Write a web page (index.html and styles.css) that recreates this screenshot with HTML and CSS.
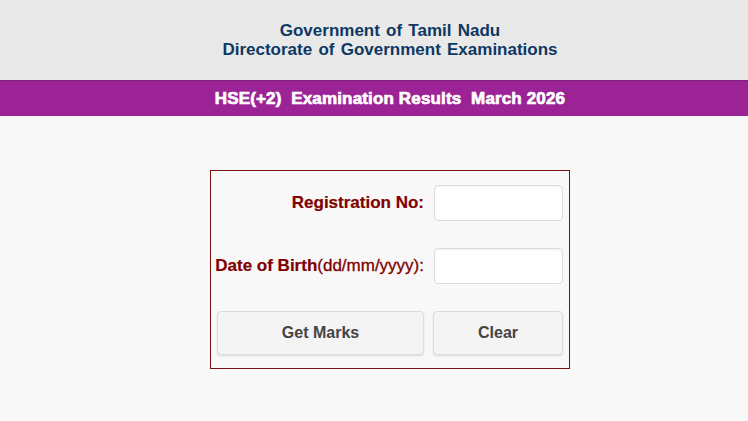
FILE: index.html
```html
<!DOCTYPE html>
<html>
<head>
<meta charset="utf-8">
<link rel="stylesheet" href="styles.css">
</head>
<body>
<header class="top">
  <div class="org">Government of Tamil Nadu</div>
  <div class="org">Directorate of Government Examinations</div>
</header>
<div class="band">HSE(+2)&nbsp; Examination Results&nbsp; March 2026</div>
<main class="main">
  <form class="box">
    <div class="row">
      <label class="lbl">Registration No:</label>
      <input class="inp" type="text">
    </div>
    <div class="row">
      <label class="lbl">Date of Birth<span class="fmt">(dd/mm/yyyy):</span></label>
      <input class="inp" type="text">
    </div>
    <div class="row btns">
      <button type="button" class="btn wide">Get Marks</button>
      <button type="button" class="btn narrow">Clear</button>
    </div>
  </form>
</main>
</body>
</html>
```
FILE: styles.css
```css
html, body { margin: 0; padding: 0; }
body { background: #f8f8f8; font-family: "Liberation Sans", Arial, sans-serif; }
.top {
  background: #e9e9e9;
  height: 80px;
  box-sizing: border-box;
  padding: 21px 0 0 32px;
  text-align: center;
}
.org {
  color: #0d3864;
  font-weight: bold;
  font-size: 17px;
  line-height: 19px;
  word-spacing: 1.5px;
}
.band {
  background: #9b2395;
  border-top: 1px solid #7e1f7a;
  height: 36px;
  box-sizing: border-box;
  padding-left: 32px;
  color: #fff;
  font-weight: bold;
  font-size: 17px;
  line-height: 35px;
  text-align: center;
  -webkit-text-stroke: 0.7px #fff;
  letter-spacing: 0.15px;
}
.main { display: flex; justify-content: center; padding: 54px 0 0 32px; }
.box {
  width: 360px;
  height: 199px;
  box-sizing: border-box;
  border: 1px solid #7a1010;
  padding: 14px 6px 0 6px;
  display: flex;
  flex-direction: column;
  gap: 27px;
}
.row { display: flex; align-items: center; justify-content: flex-end; gap: 10px; }
.lbl {
  color: #800000;
  font-weight: bold;
  font-size: 17px;
  white-space: nowrap;
  flex-shrink: 0;
  -webkit-text-stroke: 0.2px #800000;
}
.fmt { font-weight: normal; -webkit-text-stroke: 0.3px #800000; }
.inp {
  width: 129px;
  height: 36px;
  box-sizing: border-box;
  border: 1px solid #dcdcdc;
  border-radius: 4px;
  background: #fff;
  box-shadow: inset 0 1px 2px rgba(0,0,0,0.06);
  margin: 0;
  flex-shrink: 0;
}
.btns { justify-content: space-between; gap: 0; }
.btn {
  height: 44px;
  box-sizing: border-box;
  background: #f4f4f4;
  border: 1px solid #dcdcdc;
  border-radius: 4px;
  box-shadow: 0 1px 2px rgba(0,0,0,0.12);
  color: #444;
  font-family: "Liberation Sans", Arial, sans-serif;
  font-weight: bold;
  font-size: 16px;
  padding: 0;
}
.wide { width: 207px; }
.narrow { width: 130px; }
```
